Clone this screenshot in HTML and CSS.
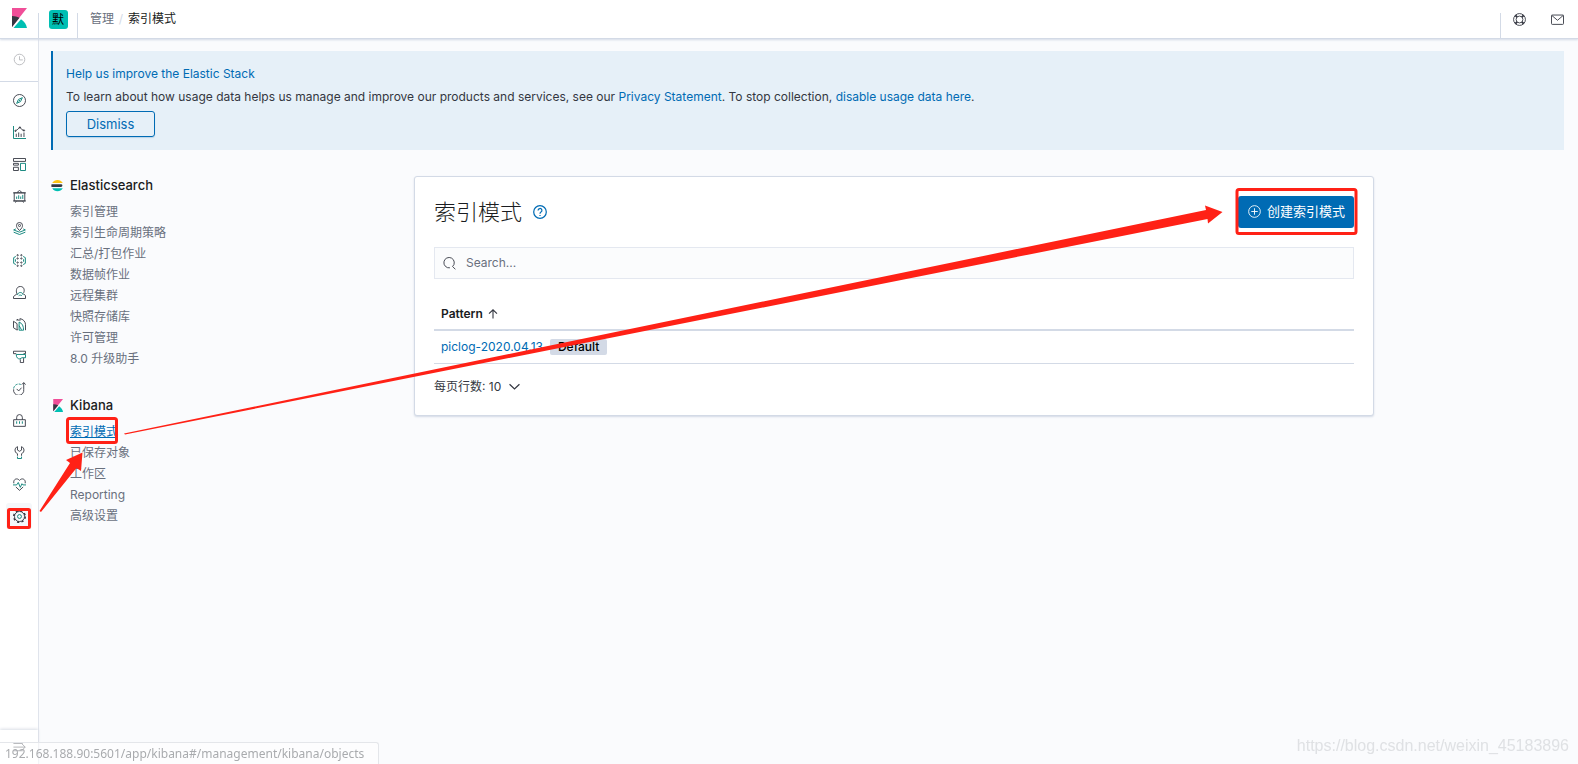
FILE: index.html
```html
<!DOCTYPE html>
<html lang="zh-CN">
<head>
<meta charset="utf-8">
<title>索引模式 - Kibana</title>
<link rel="stylesheet" href="styles.css">
</head>
<body>
<header class="header">
  <a class="logo" href="#" aria-label="Kibana">
    <svg class="logo-mark" viewBox="0 0 15 20"><path fill="#f04e98" d="M0 0v19L15 0z"/><path fill="#343741" d="M0 8v11l7.500-9.300A16 16 0 0 0 0 8z"/><path fill="#00bfb3" d="M9 11.200 1.500 20H15c-.6-3.700-2.800-6.700-6-8.800z"/></svg>
  </a>
  <button class="space" type="button"><span class="space-badge">默</span></button>
  <nav class="crumbs"><a class="crumb" href="#">管理</a><span class="crumb-sep">/</span><span class="crumb-current">索引模式</span></nav>
  <div class="header-tools">
    <button class="tool" type="button" aria-label="Help"><svg class="icon" viewBox="0 0 16 16"><circle cx="8" cy="8" r="7.300"/><circle cx="8" cy="8" r="4.200"/><path stroke-width="2.400" d="M2.800 2.800l2.300 2.300M13.200 2.800l-2.300 2.300M2.800 13.200l2.300-2.300M13.200 13.200l-2.300-2.300"/></svg></button>
    <button class="tool" type="button" aria-label="Newsfeed"><svg class="icon" viewBox="0 0 16 16"><rect x=".6" y="2.500" width="14.800" height="11.500" rx="1"/><path d="M1 3l7 6 7-6"/></svg></button>
  </div>
</header>
<div class="shell">
  <nav class="rail">
    <div class="rail-recent"><a class="rail-link rail-muted" href="#" aria-label="Recent"><svg class="icon" viewBox="0 0 16 16"><circle cx="8" cy="8" r="6.500"/><path d="M8 4v4.500h4"/></svg></a></div>
    <div class="rail-apps">
      <a class="rail-link" href="#" aria-label="Discover"><svg class="icon" viewBox="0 0 16 16"><circle cx="8" cy="8" r="7.400"/><path class="teal" d="M11.500 4.500 9.300 9.300 4.500 11.500 6.700 6.700zM7 9l2-2"/></svg></a>
      <a class="rail-link" href="#" aria-label="Visualize"><svg class="icon" viewBox="0 0 16 16"><path class="teal" d="M.6 0v15.400H16"/><path d="M4 9.500v4M7 8v5.500M10 9.500v4M13.500 8v5.500M3 6l3-2 2.500-2.500L11 4.500l2.500 1"/><circle cx="8.500" cy="1.800" r=".8"/><circle cx="3" cy="6" r=".8"/><circle cx="13.500" cy="5.500" r=".8"/></svg></a>
      <a class="rail-link" href="#" aria-label="Dashboard"><svg class="icon" viewBox="0 0 16 16"><path d="M.6.600h14.800v3.600H.6zM.6 6.600h6v2.200h-6zM.6 11.400h6v4h-6z"/><path class="teal" d="M9.200 6.600h6.200v8.800H9.200z"/></svg></a>
      <a class="rail-link" href="#" aria-label="Canvas"><svg class="icon" viewBox="0 0 16 16"><path d="M1.500 3.500h13v10h-13zM0 3.500h16M0 13.500h16M5 3l3-2.500L11 3M4 14l-1 1.500M12 14l1 1.500"/><path class="teal" d="M4.500 8v3M7 6.500v4.500M9.500 8v3M12 6v5"/></svg></a>
      <a class="rail-link" href="#" aria-label="Maps"><svg class="icon" viewBox="0 0 16 16"><path d="M8 10.500C5 7.500 4.300 6 4.300 4.300a3.700 3.700 0 0 1 7.400 0C11.700 6 11 7.500 8 10.500z"/><circle cx="8" cy="4.300" r="1.300"/><path class="teal" d="M3.500 8.500.8 9.800 8 12.500l7.200-2.700-2.700-1.300M.8 12.500 8 15.400l7.200-2.900"/></svg></a>
      <a class="rail-link" href="#" aria-label="Machine learning"><svg class="icon" viewBox="0 0 16 16"><path class="teal" d="M3.500 3 .8 4.500v7L3.500 13M12.500 3l2.700 1.500v7L12.500 13M3 6.500v3M13 6.500v3"/><circle cx="5.700" cy="1.500" r=".8"/><circle cx="10.300" cy="1.500" r=".8"/><circle cx="5.700" cy="5.500" r=".8"/><circle cx="10.300" cy="5.500" r=".8"/><circle cx="5.700" cy="10.500" r=".8"/><circle cx="10.300" cy="10.500" r=".8"/><circle cx="5.700" cy="14.500" r=".8"/><circle cx="10.300" cy="14.500" r=".8"/></svg></a>
      <a class="rail-link" href="#" aria-label="Metrics"><svg class="icon" viewBox="0 0 16 16"><path d="M5 9.500C3.500 7.500 3.500.600 9 .600s5.500 6 3.700 8.400M5 9.500.6 13v2.400h14.800V12L13 9.500"/><path class="teal" d="M5.500 11C6 7 12 7 12.500 11M7 12c1-1 3-1 4 0"/></svg></a>
      <a class="rail-link" href="#" aria-label="Logs"><svg class="icon" viewBox="0 0 16 16"><path d="M6 14.500H4.500L.6 12V4l4.400 3v7.500M5 3.500V1.500L7.500 3M8.500 3.500V.800c4 .5 6.600 3.500 6.900 7V15"/><path class="teal" d="M7.500 5v10h5.500c0-5-1.500-8.500-5.500-10zM7.500 9.500l3 5"/></svg></a>
      <a class="rail-link" href="#" aria-label="APM"><svg class="icon" viewBox="0 0 16 16"><path d="M4 4.500H.600v-3h14.800v3H13M9 11.500v4h4V10"/><path class="teal" d="M4 5.500h11.400v4H11L8.500 11C6 11 4 9.500 4 5.500z"/></svg></a>
      <a class="rail-link" href="#" aria-label="Uptime"><svg class="icon" viewBox="0 0 16 16"><path d="M.8 9A6.300 6.300 0 1 0 13.200 9V1M10.800 3.200 13.200.700l2.300 2.500"/><path class="teal" d="M.8 8A6.300 6.300 0 0 1 9.500 3" stroke-dasharray="3 1.500"/><path d="M4.500 8.500 7 11l3.500-4"/></svg></a>
      <a class="rail-link" href="#" aria-label="SIEM"><svg class="icon" viewBox="0 0 16 16"><path d="M4.500 7V4.200a3.500 3.500 0 0 1 7 0V7M.8 7h14.400v8.200H.8z"/><path class="teal" d="M4.500 9v3M8 9v3M11.500 9v3"/></svg></a>
      <a class="rail-link" href="#" aria-label="Dev tools"><svg class="icon" viewBox="0 0 16 16"><path d="M5.500 12V9.500C1 7.500 2 2 5.500.800V5L8 6.500 10.500 5V.800C14 2 15 7.500 10.500 9.500V12"/><path class="teal" d="M5.500 13v2.400h5V13"/></svg></a>
      <a class="rail-link" href="#" aria-label="Stack monitoring"><svg class="icon" viewBox="0 0 16 16"><path d="M1 6.500C0 1 5.500-.5 8 3c2.500-3.500 8-2 7 3.500M3.500 11 8 15.200 12.500 11"/><path class="teal" d="M0 8.500h4.500L6.500 5.500l2.500 6 2-4.500 1.200 1.500H16"/></svg></a>
      <a class="rail-link rail-active" href="#" aria-label="Management"><svg class="icon" viewBox="0 0 16 16"><circle cx="8" cy="8" r="6.200"/><circle cx="8" cy="8" r="7.100" stroke-dasharray="2.790 2.790" stroke-width="1.800"/><circle class="teal" cx="8" cy="8" r="2.400"/></svg></a>
    </div>
    <button class="rail-toggle" type="button" aria-label="Expand"><svg class="icon" viewBox="0 0 16 16"><path d="M.5 3H12M.5 7.500H15M.5 12H12M11 3.500l4 4-4 4"/></svg></button>
  </nav>
  <div class="content">
    <section class="callout">
      <h2 class="callout-title">Help us improve the Elastic Stack</h2>
      <p class="callout-text">To learn about how usage data helps us manage and improve our products and services, see our <a class="link" href="#">Privacy Statement</a>. To stop collection, <a class="link" href="#">disable usage data here</a>.</p>
      <button class="dismiss" type="button">Dismiss</button>
    </section>
    <div class="columns">
      <nav class="side">
        <section class="side-group">
          <h3 class="side-title"><svg class="side-logo" viewBox="0 0 13 13"><path fill="#fec514" d="M1.200 4A6.200 6.200 0 0 1 11.800 4z"/><path fill="#343741" d="M.5 5.200h9.500a1.300 1.300 0 0 1 0 2.800H.5a6 6 0 0 1 0-2.800z"/><path fill="#00bfb3" d="M1.200 9.200h10.600a6.200 6.200 0 0 1-10.600 0z"/></svg>Elasticsearch</h3>
          <ul class="side-list">
            <li><a class="side-link" href="#">索引管理</a></li>
            <li><a class="side-link" href="#">索引生命周期策略</a></li>
            <li><a class="side-link" href="#">汇总/打包作业</a></li>
            <li><a class="side-link" href="#">数据帧作业</a></li>
            <li><a class="side-link" href="#">远程集群</a></li>
            <li><a class="side-link" href="#">快照存储库</a></li>
            <li><a class="side-link" href="#">许可管理</a></li>
            <li><a class="side-link" href="#">8.0 升级助手</a></li>
          </ul>
        </section>
        <section class="side-group">
          <h3 class="side-title"><svg class="side-logo" viewBox="-1 0 15 20"><path fill="#f04e98" d="M0 0v19L15 0z"/><path fill="#343741" d="M0 8v11l7.500-9.300A16 16 0 0 0 0 8z"/><path fill="#00bfb3" d="M9 11.200 1.500 20H15c-.6-3.700-2.800-6.700-6-8.800z"/></svg>Kibana</h3>
          <ul class="side-list">
            <li><a class="side-link side-current" href="#">索引模式</a></li>
            <li><a class="side-link" href="#">已保存对象</a></li>
            <li><a class="side-link" href="#">工作区</a></li>
            <li><a class="side-link" href="#">Reporting</a></li>
            <li><a class="side-link" href="#">高级设置</a></li>
          </ul>
        </section>
      </nav>
      <main class="panel">
        <div class="panel-head">
          <h1 class="panel-title">索引模式</h1>
          <button class="help" type="button" aria-label="Help"><svg class="help-icon" viewBox="0 0 16 16"><circle cx="8" cy="8" r="7.200"/><path d="M5.800 6.200a2.200 2.200 0 1 1 3.300 1.900C8.300 8.600 8 9 8 9.900M8 11.300v1.300"/></svg></button>
          <button class="create" type="button"><svg class="icon create-icon" viewBox="0 0 16 16"><circle cx="8" cy="8" r="7.200"/><path d="M4 8h8M8 4v8"/></svg>创建索引模式</button>
        </div>
        <label class="search"><svg class="icon" viewBox="0 0 16 16"><path d="M8.500 13.300A6.400 6.400 0 1 1 11.800 11.700l3.500 3.500"/></svg><input class="search-input" type="search" placeholder="Search..." aria-label="Search"></label>
        <table class="table">
          <thead><tr><th><button class="sort" type="button">Pattern<svg class="sort-icon" viewBox="0 0 10 10"><path d="M5 9.500V1M1 4.700 5 .800l4 3.900"/></svg></button></th></tr></thead>
          <tbody><tr><td><a class="link" href="#">piclog-2020.04.13</a><span class="badge">Default</span></td></tr></tbody>
        </table>
        <button class="rows" type="button">每页行数: 10<svg class="rows-icon" viewBox="0 0 10 10"><path d="M.5 3 5 7.300 9.500 3"/></svg></button>
      </main>
    </div>
  </div>
</div>
<div class="status">192.168.188.90:5601/app/kibana#/management/kibana/objects</div>
<div class="watermark">https://blog.csdn.net/weixin_45183896</div>
<svg class="marks" width="1578" height="764" viewBox="0 0 1578 764" aria-hidden="true">
  <g class="mark-box"><rect x="67.500" y="418.500" width="49" height="24" rx="2"/><rect x="8.500" y="509.500" width="21" height="18" rx="1"/><rect x="1237" y="189.500" width="119" height="44" rx="2"/></g>
  <g class="mark-arrow"><path d="M124 433.500 1206 210 1205 205.500 1222.500 212 1208 223.500 1207.500 219 125 434.500z"/><path d="M39.500 511 70 463 66 460 82.500 452.500 81 471 76.500 468 41 512z"/></g>
</svg>
</body>
</html>
```

FILE: styles.css
```css
* { box-sizing: border-box; }
body {
  margin: 0;
  min-height: 100vh;
  display: flex;
  flex-direction: column;
  background: #fafbfd;
  color: #343741;
  font: 12px/20px Inter, "Noto Sans CJK SC", sans-serif;
}
button, input { font: inherit; color: inherit; }
button { padding: 0; border: 0; background: none; }
a { text-decoration: none; }
h1, h2, h3, p, ul { margin: 0; padding: 0; }
ul { list-style: none; }
svg { display: block; flex: none; fill: none; stroke-width: 1.1; }
.icon { width: 13px; height: 13px; stroke: #343741; }
.teal { stroke: #017d73; }
.link { color: #006bb4; }

.header {
  position: relative;
  height: 39px;
  display: flex;
  background: #fff;
  border-bottom: 1px solid #d3dae6;
  box-shadow: 0 1px 2px #d3dae6;
}
.logo { width: 38px; padding: 8px 11px 0 12px; }
.logo-mark { width: 15px; height: 20px; }
.space {
  width: 40px;
  height: 25px;
  margin-top: 13px;
  display: flex;
  justify-content: center;
  border: solid #d3dae6;
  border-width: 0 1px;
}
.space-badge {
  width: 19px;
  height: 19px;
  margin-top: -3px;
  border-radius: 3px;
  background: #00bfb3;
  color: #000;
  line-height: 19px;
}
.crumbs { display: flex; padding: 9px 12px; }
.crumb { color: #69707d; }
.crumb-sep { width: 14px; text-align: center; color: #d3dae6; }
.crumb-current { color: #1a1c21; }
.header-tools {
  margin: 13px 14px 0 auto;
  padding-left: 12px;
  display: flex;
  gap: 25px;
  border-left: 1px solid #d3dae6;
}
.tool { height: 13px; }

.shell { flex: 1; display: flex; }
.rail {
  width: 39px;
  flex: none;
  display: flex;
  flex-direction: column;
  background: #fff;
  border-right: 1px solid #e0e4ec;
}
.rail-recent { padding: 7px 6px 9px; border-bottom: 1px solid #d3dae6; }
.rail-apps { padding: 5px 6px; display: grid; gap: 6px; }
.rail-link {
  height: 26px;
  display: grid;
  place-items: center;
  border-radius: 3px;
}
.rail-muted { opacity: 0.35; }
.rail-active { background: #f5f7fa; }
.rail-toggle {
  height: 34px;
  margin-top: auto;
  display: grid;
  place-items: center;
  box-shadow: 0 -1px 3px #d9dde5;
}
.content { flex: 1; min-width: 0; padding: 12px 14px 12px 12px; }

.callout {
  padding: 13px;
  border-left: 2px solid #006bb4;
  background: #e6f0f8;
}
.callout-title { font-size: 12px; font-weight: 400; line-height: 20px; color: #006bb4; }
.callout-text { padding: 3px 0 4px; }
.dismiss {
  width: 89px;
  height: 26px;
  border: 1px solid #006bb4;
  border-radius: 3px;
  color: #006bb4;
  font-size: 13px;
  box-shadow: 0 1px 1px #b8d3e8;
}

.columns { display: flex; align-items: flex-start; margin-top: 26px; }
.side { width: 363px; flex: none; }
.side-group { margin-bottom: 27px; }
.side-title {
  display: flex;
  align-items: center;
  gap: 6px;
  font-size: 13px;
  font-weight: 500;
  line-height: 18px;
  color: #1a1c21;
}
.side-logo { width: 13px; height: 13px; }
.side-list { padding: 7px 0 0 19px; }
.side-link { display: block; line-height: 21px; color: #69707d; }
.side-current { width: 48px; color: #006bb4; text-decoration: underline; }

.panel {
  flex: 0 1 960px;
  padding: 19px 19px 18px;
  background: #fff;
  border: 1px solid #d3dae6;
  border-radius: 3px;
  box-shadow: 0 1px 2px #d3dae6;
}
.panel-head { display: flex; align-items: center; gap: 11px; }
.panel-title { font-size: 22px; font-weight: 300; line-height: 32px; color: #1a1c21; }
.help-icon { width: 14px; height: 14px; stroke: #006bb4; stroke-width: 1.4; }
.create {
  height: 32px;
  margin-left: auto;
  padding: 0 9px 2px 10px;
  display: flex;
  align-items: center;
  gap: 6px;
  border-radius: 3px;
  background: #006bb4;
  color: #fff;
  font-size: 13px;
}
.create-icon { stroke: #fff; }
.search {
  height: 32px;
  margin-top: 19px;
  padding: 0 8px;
  display: flex;
  align-items: center;
  gap: 10px;
  border: 1px solid #e4e8f0;
  background: #fbfcfd;
}
.search-input { flex: 1; border: 0; padding: 0; background: none; outline: 0; }
.search-input::placeholder { color: #69707d; opacity: 1; }
.table { width: 100%; margin-top: 19px; border-collapse: collapse; }
.table th { padding: 6px 7px 5px; text-align: left; border-bottom: 2px solid #d3dae6; }
.table td { height: 33px; padding: 0 7px; border-bottom: 1px solid #d3dae6; }
.sort { display: flex; align-items: center; gap: 5px; font-weight: 600; color: #1a1c21; }
.sort-icon { width: 10px; height: 10px; stroke: #343741; }
.badge {
  display: inline-block;
  margin-left: 7px;
  padding: 0 8px;
  border-radius: 2px;
  background: #d3dae6;
  color: #000;
  font-weight: 500;
  line-height: 16px;
}
.rows { display: flex; align-items: center; gap: 8px; margin-top: 13px; }
.rows-icon { width: 11px; height: 11px; stroke: #343741; }

.status {
  position: fixed;
  left: 0;
  bottom: 0;
  padding: 0 14px 0 5px;
  border: solid #e4e6ea;
  border-width: 1px 1px 0 0;
  border-radius: 0 3px 0 0;
  background: rgba(255, 255, 255, 0.6);
  color: #a9abae;
  font-family: "Noto Sans", sans-serif;
  line-height: 21px;
}
.watermark {
  position: fixed;
  right: 9px;
  bottom: 8px;
  color: #dfe1e4;
  font: 16px/20px "Liberation Sans", sans-serif;
}
.marks { position: absolute; top: 0; left: 0; pointer-events: none; }
.mark-box { stroke: #ff2116; stroke-width: 3; }
.mark-arrow { fill: #ff2116; }
```
